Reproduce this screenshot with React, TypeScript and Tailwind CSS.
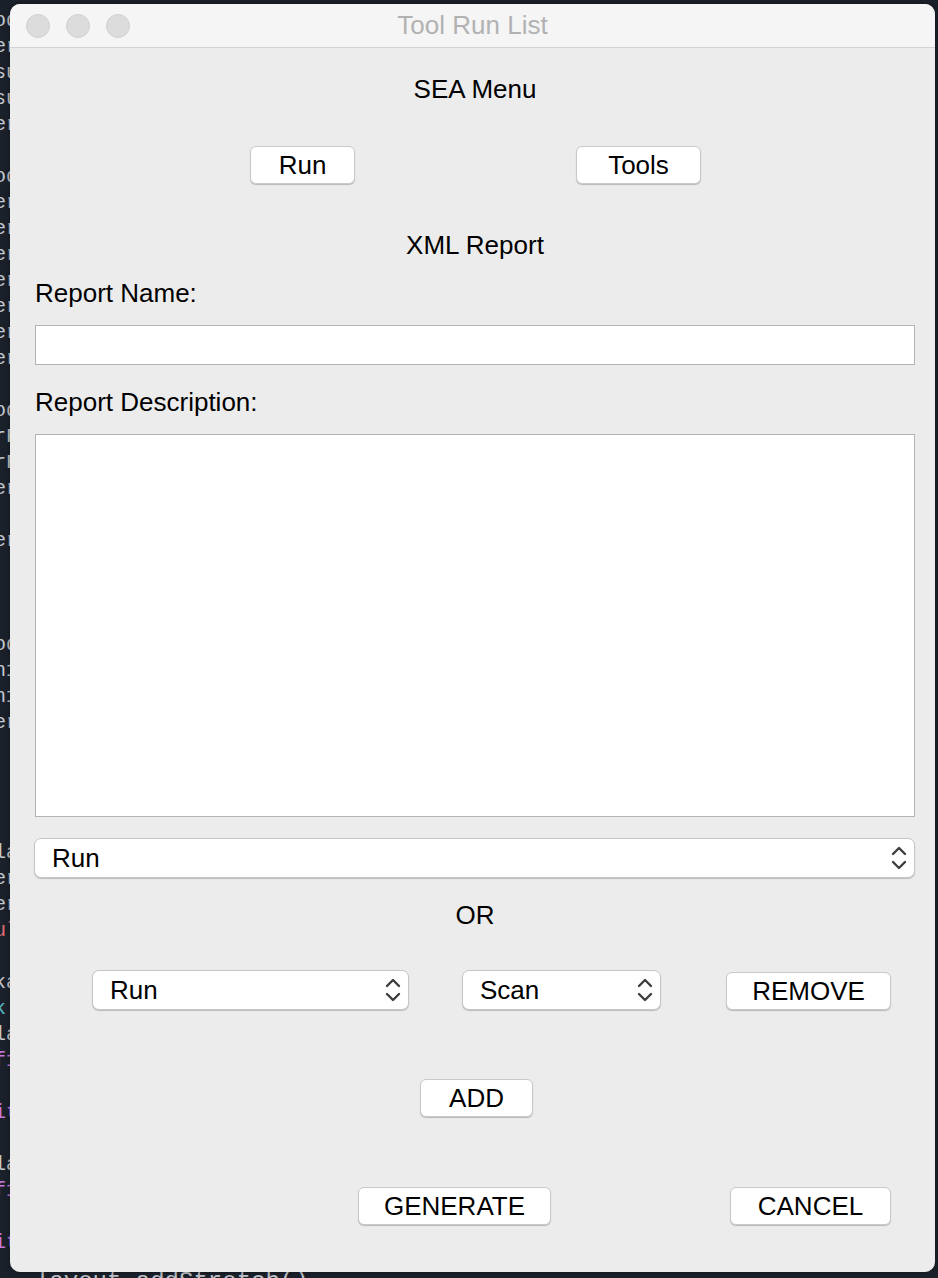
import React from "react";

const codeLines: { t: string; c?: string }[] = [
  { t: "od" }, { t: "er" }, { t: "su" }, { t: "su" }, { t: "er" }, { t: "" },
  { t: "od" }, { t: "er" }, { t: "er" }, { t: "er" }, { t: "er" }, { t: "er" },
  { t: "er" }, { t: "er" }, { t: "" }, { t: "od" }, { t: "rF" }, { t: "rF" },
  { t: "er" }, { t: "" }, { t: "er" }, { t: "" }, { t: "" }, { t: "" },
  { t: "od" }, { t: "n1" }, { t: "n1" }, { t: "er" }, { t: "" }, { t: "" },
  { t: "" }, { t: "" }, { t: "la" }, { t: "er" }, { t: "er" },
  { t: "ul", c: "text-[#e06c75]" }, { t: "" }, { t: "ka" }, { t: "k", c: "text-[#56b6c2]" },
  { t: "la" }, { t: "f1", c: "text-[#c678dd]" }, { t: "" }, { t: "it", c: "text-[#c678dd]" },
  { t: "" }, { t: "la" }, { t: "f1", c: "text-[#c678dd]" }, { t: "" }, { t: "it", c: "text-[#c678dd]" },
];

const font = { fontFamily: '"Liberation Sans", Arial, sans-serif' };

function Btn({ label, w, className = "" }: { label: string; w: string; className?: string }) {
  return (
    <div
      className={`${w} ${className} h-[38px] flex items-center justify-center rounded-[6px] bg-white border border-[#c9c9c9] shadow-[0_1px_1px_rgba(0,0,0,0.22)] text-[26px] text-black`}
    >
      {label}
    </div>
  );
}

function Chevrons() {
  return (
    <svg width="16" height="26" viewBox="0 0 16 26" fill="none" stroke="#3d3d3d" strokeWidth="2.4" strokeLinecap="round" strokeLinejoin="round">
      <path d="M2 9 L8 3 L14 9" />
      <path d="M2 17 L8 23 L14 17" />
    </svg>
  );
}

function Select({ label, w, className = "" }: { label: string; w: string; className?: string }) {
  return (
    <div
      className={`${w} ${className} h-[40px] flex items-center justify-between pl-[17px] pr-[7px] rounded-[7px] bg-white border border-[#c6c6c6] shadow-[0_1px_1px_rgba(0,0,0,0.2)] text-[26px] text-black`}
    >
      <span>{label}</span>
      <Chevrons />
    </div>
  );
}

export default function App() {
  return (
    <div className="relative w-[938px] h-[1278px] overflow-hidden bg-[#1b212b]" style={font}>
      {/* editor text behind the window */}
      <div className="flex flex-col pt-[8px] ml-[-6px] text-[20px] leading-[26px] text-[#c3c7ce]" style={{ fontFamily: '"Liberation Mono", monospace' }}>
        {codeLines.map((l, i) => (
          <div key={i} className={`h-[26px] ${l.c ?? ""}`}>{l.t}</div>
        ))}
      </div>
      <div className="absolute left-[35px] top-[1264px] text-[24px] text-[#c3c7ce]" style={{ fontFamily: '"Liberation Mono", monospace' }}>
        layout.addStretch()
      </div>

      {/* window */}
      <div className="absolute left-[10px] top-[4px] w-[925px] h-[1268px] rounded-[10px] overflow-hidden bg-[#ececec] flex flex-col shadow-[0_0_6px_rgba(0,0,0,0.4)]">
        <div className="relative h-[44px] shrink-0 bg-[#f5f5f5] border-b border-[#d3d3d3] flex items-center">
          <div className="flex gap-[16px] pl-[16px]">
            <div className="w-[24px] h-[24px] rounded-full bg-[#dcdcdc] border border-[#d0d0d0]" />
            <div className="w-[24px] h-[24px] rounded-full bg-[#dcdcdc] border border-[#d0d0d0]" />
            <div className="w-[24px] h-[24px] rounded-full bg-[#dcdcdc] border border-[#d0d0d0]" />
          </div>
          <div className="absolute inset-0 flex items-center justify-center text-[26px] text-[#b2b2b2]">
            Tool Run List
          </div>
        </div>

        <div className="flex flex-col pl-[25px] pr-[20px] text-[26px] leading-[30px] text-black">
          <div className="mt-[26px] text-center">SEA Menu</div>

          <div className="mt-[42px] flex">
            <Btn label="Run" w="w-[105px]" className="ml-[215px]" />
            <Btn label="Tools" w="w-[125px]" className="ml-[221px]" />
          </div>

          <div className="mt-[46px] text-center">XML Report</div>

          <div className="mt-[18px]">Report Name:</div>
          <div className="mt-[17px] h-[40px] bg-white border border-[#b4b4b4]" />

          <div className="mt-[22px]">Report Description:</div>
          <div className="mt-[17px] h-[383px] bg-white border border-[#b4b4b4]" />

          <Select label="Run" w="w-auto" className="mt-[21px] ml-[-1px]" />

          <div className="mt-[22px] text-center">OR</div>

          <div className="mt-[40px] flex items-start">
            <Select label="Run" w="w-[317px]" className="ml-[57px]" />
            <Select label="Scan" w="w-[199px]" className="ml-[53px]" />
            <Btn label="REMOVE" w="w-[165px]" className="ml-[65px] mt-[2px]" />
          </div>

          <div className="mt-[69px] flex">
            <Btn label="ADD" w="w-[113px]" className="ml-[385px]" />
          </div>

          <div className="mt-[70px] flex">
            <Btn label="GENERATE" w="w-[193px]" className="ml-[323px]" />
            <Btn label="CANCEL" w="w-[161px]" className="ml-[179px]" />
          </div>
        </div>
      </div>
    </div>
  );
}
